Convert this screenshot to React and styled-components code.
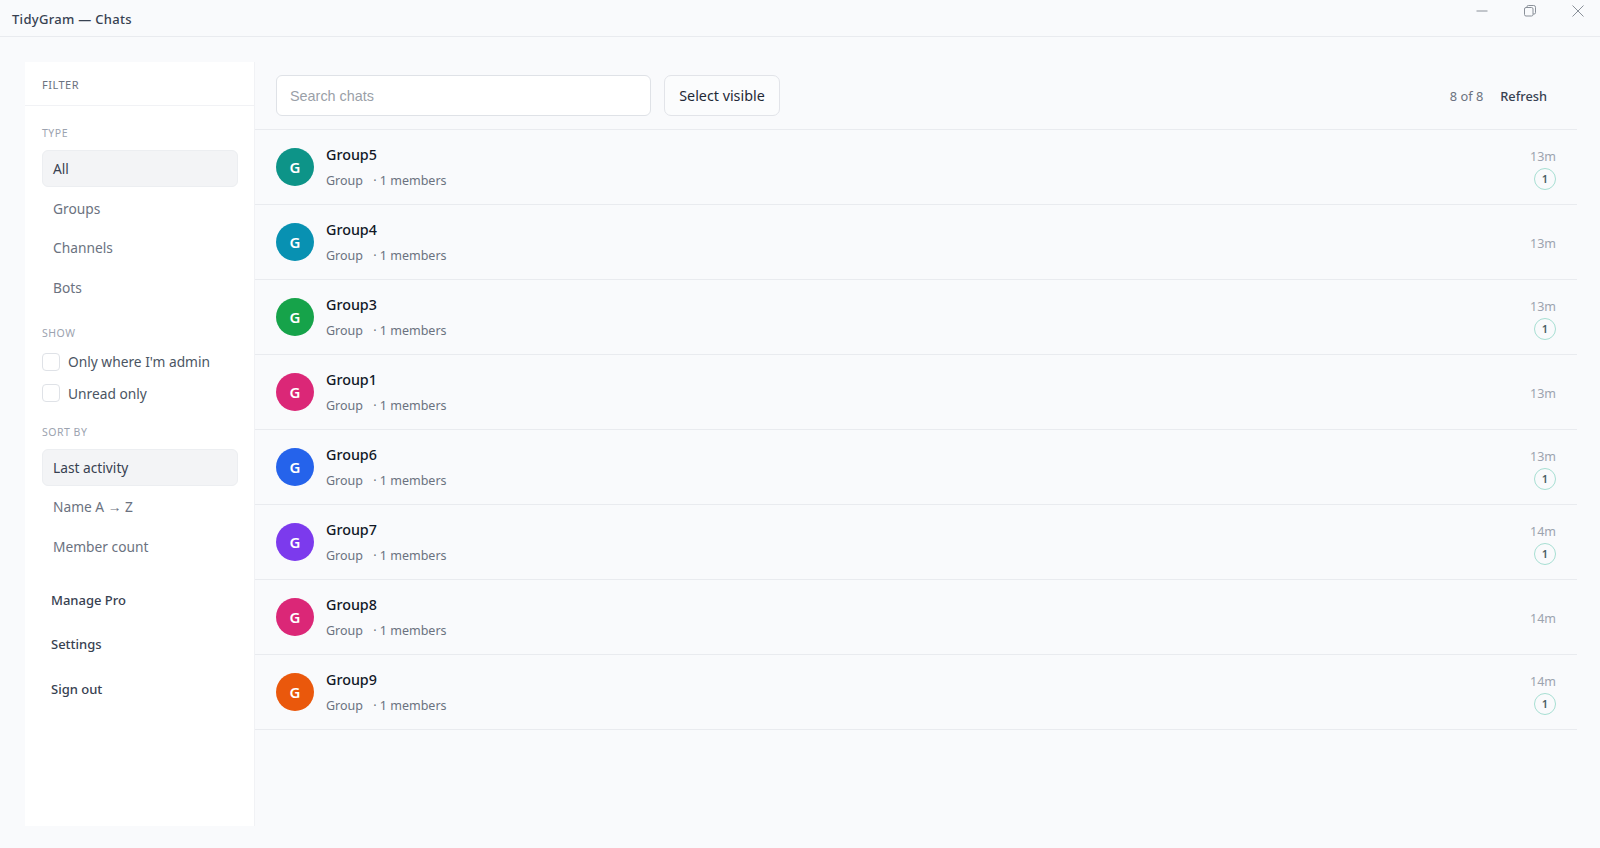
import styled, { createGlobalStyle } from "styled-components";

const chats = [
  { name: "Group5", color: "#0d9488", time: "13m", unread: 1 },
  { name: "Group4", color: "#0891b2", time: "13m", unread: 0 },
  { name: "Group3", color: "#16a34a", time: "13m", unread: 1 },
  { name: "Group1", color: "#db2777", time: "13m", unread: 0 },
  { name: "Group6", color: "#2563eb", time: "13m", unread: 1 },
  { name: "Group7", color: "#7c3aed", time: "14m", unread: 1 },
  { name: "Group8", color: "#db2777", time: "14m", unread: 0 },
  { name: "Group9", color: "#ea580c", time: "14m", unread: 1 },
];

const GlobalStyle = createGlobalStyle`
  html, body {
    margin: 0;
    height: 100%;
    background: #f9fafc;
    font-family: "Noto Sans", "Open Sans", sans-serif;
  }
  * { box-sizing: border-box; }
`;

const Page = styled.div`
  width: 1600px;
  height: 848px;
  display: flex;
  flex-direction: column;
  overflow: hidden;
`;

const TitleBar = styled.header`
  height: 37px;
  flex: none;
  display: flex;
  justify-content: space-between;
  border-bottom: 1px solid #e9ebef;
`;

const Title = styled.div`
  padding: 10px 0 0 12px;
  font-size: 13px;
  font-weight: 500;
  letter-spacing: 0.3px;
  color: #374151;
`;

const WindowControls = styled.div`
  display: flex;
  gap: 34px;
  padding: 4px 15px 0 0;
  color: #8a9099;
  svg { display: block; }
`;

const Body = styled.div`
  flex: 1;
  display: flex;
  padding: 25px 23px 22px 25px;
  min-height: 0;
`;

const Sidebar = styled.aside`
  width: 230px;
  flex: none;
  background: #fff;
  border-right: 1px solid #f1f2f5;
`;

const SidebarHead = styled.div`
  height: 44px;
  padding: 15px 17px 0;
  font-size: 11px;
  letter-spacing: 0.5px;
  color: #6b7280;
  border-bottom: 1px solid #f1f2f5;
`;

const SidebarBody = styled.div`
  padding: 20px 16px 0 17px;
`;

const SectionLabel = styled.div`
  font-size: 10.5px;
  letter-spacing: 0.5px;
  line-height: 15px;
  color: #9ca3af;
  margin-bottom: ${({ $gap }) => $gap}px;
`;

const Options = styled.div`
  display: flex;
  flex-direction: column;
  gap: 2.6px;
  margin-bottom: ${({ $gap }) => $gap}px;
`;

const Option = styled.div`
  height: 37px;
  display: flex;
  align-items: center;
  padding: 0 10px;
  font-size: 13.75px;
  border-radius: 6px;
  color: ${({ $active }) => ($active ? "#374151" : "#6b7280")};
  background: ${({ $active }) => ($active ? "#f3f4f6" : "transparent")};
  border: 1px solid ${({ $active }) => ($active ? "#eceef1" : "transparent")};
`;

const Checks = styled.div`
  display: flex;
  flex-direction: column;
  gap: 12.5px;
  margin-bottom: 22px;
`;

const CheckRow = styled.label`
  display: flex;
  align-items: center;
  gap: 8px;
  height: 19px;
  font-size: 13.75px;
  color: #4b5563;
`;

const Box = styled.span`
  width: 18px;
  height: 18px;
  border: 1px solid #dfe2e7;
  border-radius: 4px;
  background: #fff;
`;

const Links = styled.div`
  display: flex;
  flex-direction: column;
  gap: 25.5px;
  padding: 26px 0 0 9px;
`;

const LinkItem = styled.div`
  font-size: 13px;
  line-height: 19px;
  font-weight: 500;
  color: #374151;
`;

const Main = styled.main`
  flex: 1;
  min-width: 0;
`;

const Toolbar = styled.div`
  height: 68px;
  display: flex;
  align-items: flex-start;
  padding: 13px 0 0 21px;
  border-bottom: 1px solid #e9ebef;
`;

const Search = styled.input`
  width: 375px;
  height: 41px;
  padding: 0 13px;
  border: 1px solid #dfe2e7;
  border-radius: 6px;
  background: #fff;
  outline: none;
  font-family: "Liberation Sans", Arial, sans-serif;
  font-size: 14.4px;
  &::placeholder { color: #9a9fa8; opacity: 1; }
`;

const SelectButton = styled.button`
  width: 116px;
  height: 41px;
  margin-left: 13px;
  border: 1px solid #e2e4e9;
  border-radius: 7px;
  background: #fbfcfd;
  font-family: "Noto Sans", "Open Sans", sans-serif;
  font-size: 14.3px;
  color: #1f2937;
`;

const ToolbarRight = styled.div`
  margin-left: auto;
  display: flex;
  gap: 17px;
  height: 41px;
  align-items: center;
  padding-right: 30px;
  font-size: 12.8px;
`;

const Count = styled.span`
  color: #6b7280;
`;

const Refresh = styled.span`
  font-weight: 500;
  color: #374151;
`;

const Row = styled.div`
  height: 75px;
  display: flex;
  align-items: center;
  padding: 0 21px;
  border-bottom: 1px solid #e9ebef;
`;

const Avatar = styled.div`
  width: 38px;
  height: 38px;
  flex: none;
  border-radius: 50%;
  display: flex;
  align-items: center;
  justify-content: center;
  font-size: 15px;
  font-weight: 600;
  color: #fff;
  background: ${({ $color }) => $color};
`;

const Info = styled.div`
  flex: 1;
  margin-left: 12px;
  padding-top: 1px;
`;

const Name = styled.div`
  font-size: 14.3px;
  font-weight: 500;
  line-height: 20px;
  color: #111827;
`;

const Meta = styled.div`
  margin-top: 7px;
  font-size: 12.5px;
  line-height: 18px;
  color: #6b7280;
  span { margin-left: 7px; }
`;

const Side = styled.div`
  display: flex;
  flex-direction: column;
  align-items: flex-end;
  gap: 3px;
  padding-top: 3px;
`;

const Time = styled.div`
  font-size: 12.5px;
  line-height: 17px;
  color: #9ca3af;
`;

const Badge = styled.div`
  width: 22px;
  height: 22px;
  border-radius: 50%;
  border: 1px solid #a7dfd3;
  display: flex;
  align-items: center;
  justify-content: center;
  font-size: 11px;
  font-weight: 600;
  color: #4b5f63;
`;

function Section({ label, items, gap }) {
  return (
    <>
      <SectionLabel $gap={9}>{label}</SectionLabel>
      <Options $gap={gap}>
        {items.map((item, i) => (
          <Option key={item} $active={i === 0}>{item}</Option>
        ))}
      </Options>
    </>
  );
}

export default function App() {
  return (
    <Page>
      <GlobalStyle />
      <TitleBar>
        <Title>TidyGram — Chats</Title>
        <WindowControls>
          <svg width="14" height="14" viewBox="0 0 14 14" fill="none" stroke="currentColor" strokeWidth="1">
            <path d="M1.5 7h11" />
          </svg>
          <svg width="14" height="14" viewBox="0 0 14 14" fill="none" stroke="currentColor" strokeWidth="1">
            <rect x="1.5" y="3.5" width="8.5" height="8.5" rx="1.5" />
            <path d="M4 3.5V2.8a1.3 1.3 0 0 1 1.3-1.3h5.4a1.8 1.8 0 0 1 1.8 1.8v5.4a1.3 1.3 0 0 1-1.3 1.3H10" />
          </svg>
          <svg width="14" height="14" viewBox="0 0 14 14" fill="none" stroke="currentColor" strokeWidth="1">
            <path d="M1.5 1.5l11 11M12.5 1.5l-11 11" />
          </svg>
        </WindowControls>
      </TitleBar>
      <Body>
        <Sidebar>
          <SidebarHead>FILTER</SidebarHead>
          <SidebarBody>
            <Section label="TYPE" items={["All", "Groups", "Channels", "Bots"]} gap={20.5} />
            <SectionLabel $gap={11}>SHOW</SectionLabel>
            <Checks>
              <CheckRow><Box />Only where I'm admin</CheckRow>
              <CheckRow><Box />Unread only</CheckRow>
            </Checks>
            <Section label="SORT BY" items={["Last activity", "Name A → Z", "Member count"]} gap={0} />
            <Links>
              <LinkItem>Manage Pro</LinkItem>
              <LinkItem>Settings</LinkItem>
              <LinkItem>Sign out</LinkItem>
            </Links>
          </SidebarBody>
        </Sidebar>
        <Main>
          <Toolbar>
            <Search placeholder="Search chats" />
            <SelectButton>Select visible</SelectButton>
            <ToolbarRight>
              <Count>8 of 8</Count>
              <Refresh>Refresh</Refresh>
            </ToolbarRight>
          </Toolbar>
          {chats.map((chat) => (
            <Row key={chat.name}>
              <Avatar $color={chat.color}>G</Avatar>
              <Info>
                <Name>{chat.name}</Name>
                <Meta>Group <span>· 1 members</span></Meta>
              </Info>
              <Side>
                <Time>{chat.time}</Time>
                {chat.unread > 0 && <Badge>{chat.unread}</Badge>}
              </Side>
            </Row>
          ))}
        </Main>
      </Body>
    </Page>
  );
}
